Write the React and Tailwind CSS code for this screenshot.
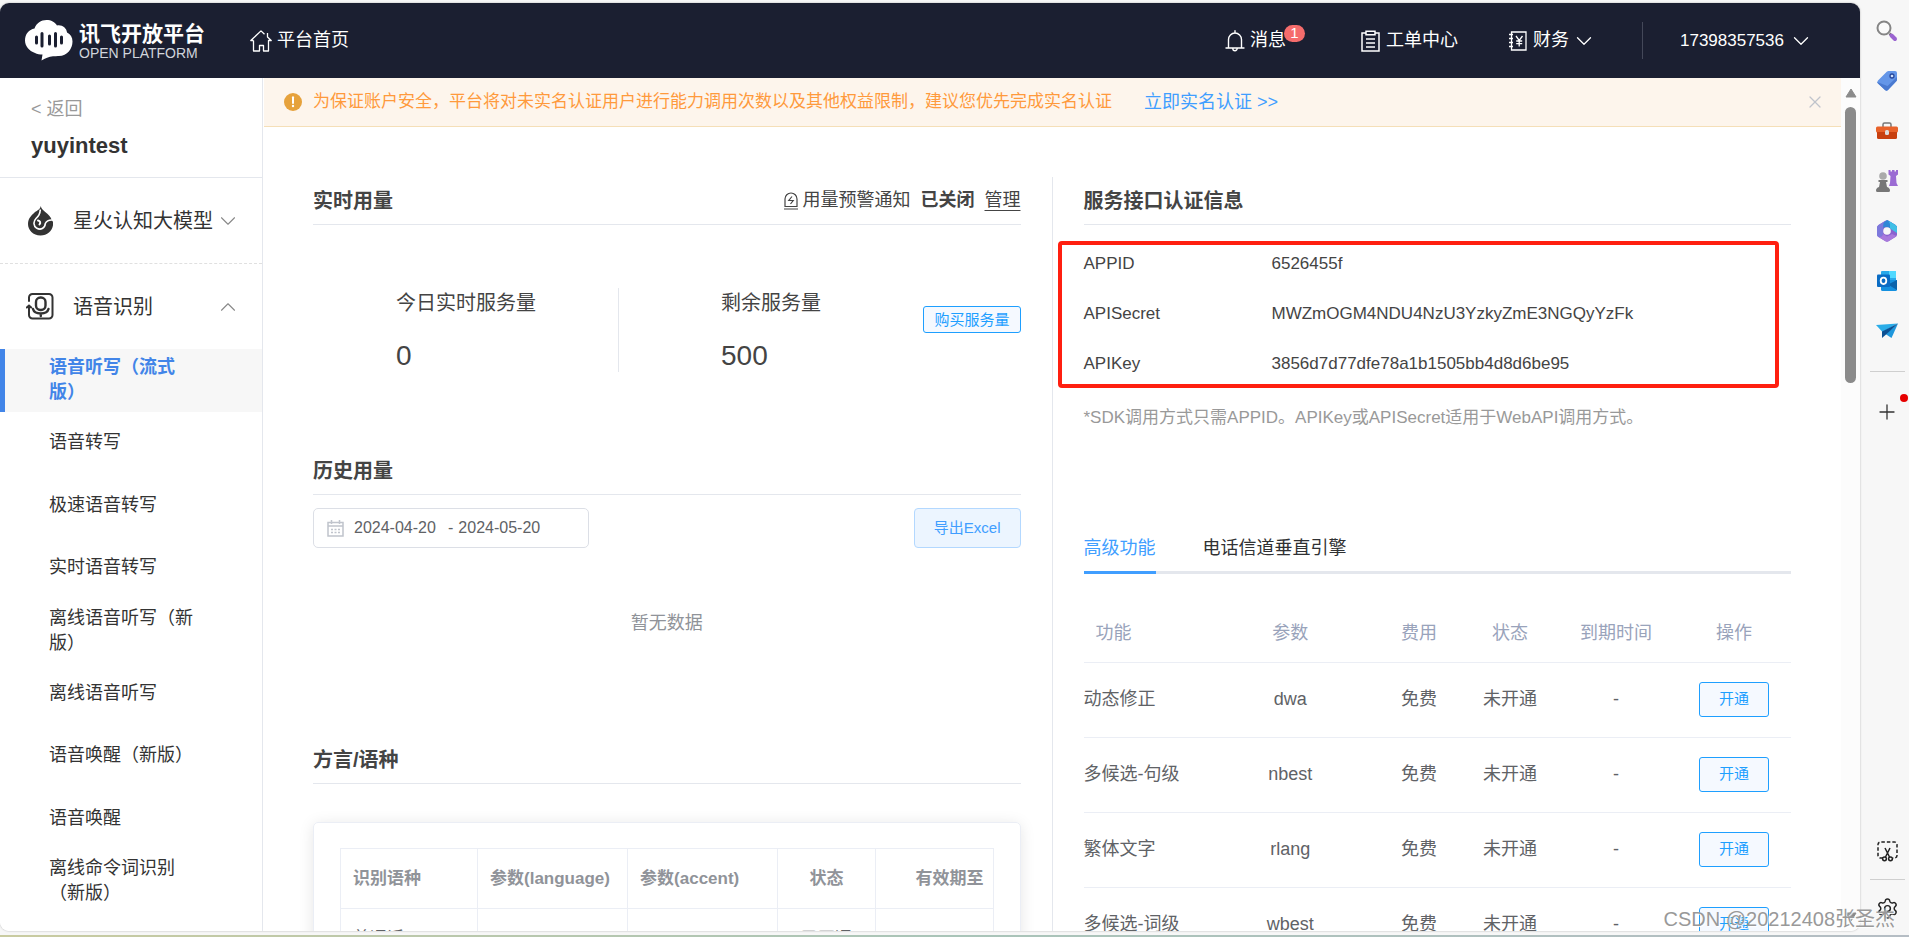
import React, { useState } from "react";
import { ChevronDown, ChevronUp, X, Plus, Settings } from "lucide-react";

const menuItems = [
  "语音听写（流式版）",
  "语音转写",
  "极速语音转写",
  "实时语音转写",
  "离线语音听写（新版）",
  "离线语音听写",
  "语音唤醒（新版）",
  "语音唤醒",
  "离线命令词识别（新版）",
];

const credentials = [
  { label: "APPID", value: "6526455f" },
  { label: "APISecret", value: "MWZmOGM4NDU4NzU3YzkyZmE3NGQyYzFk" },
  { label: "APIKey", value: "3856d7d77dfe78a1b1505bb4d8d6be95" },
];

const features = [
  { name: "动态修正", param: "dwa" },
  { name: "多候选-句级", param: "nbest" },
  { name: "繁体文字", param: "rlang" },
  { name: "多候选-词级", param: "wbest" },
];

// Icons
const LogoIcon = () => (
  <svg width="48" height="41" viewBox="0 0 48 41" aria-hidden="true">
    <path
      d="M10 33C4 31 0 26 0 20.500C0 14 4 9.500 9.500 8.500C11.500 3 16 0 21.500 0C26 0 30 2 32 5.500C37 4.500 41.500 8 42 12.500C45.500 14 47.500 17 47.500 21.500C47.500 29 42 36.500 33 36C31 36 29.500 36.500 28 36.300C24 36.500 20 38.500 16.500 40.500L17.500 34.500C15 34.500 12 34 10 33Z"
      fill="#fff"
    />
    <path d="M11.500 17v6M17 13.500v12.500M24.500 16v8M30.500 13.500v12.500M36.500 17v6" stroke="#1b1f31" strokeWidth="3" strokeLinecap="round" />
  </svg>
);

const HomeIcon = () => (
  <svg width="22" height="22" viewBox="0 0 22 22" fill="none" stroke="#fff" strokeWidth="1.300" aria-hidden="true">
    <path d="M3.500 10.500H.8L11 .9l3.500 3.300M17.500 3v4l3.700 3.500h-2.700V21h-5v-5.500h-4V21h-6V10.500" strokeLinejoin="round" />
  </svg>
);

const BellIcon = () => (
  <svg width="20" height="22" viewBox="0 0 20 22" fill="none" stroke="#fff" strokeWidth="1.400" aria-hidden="true">
    <path d="M1 18h18M3.500 18V9.500a6.500 6.500 0 0 1 13 0V18M10 3V.8M7.800 18.500a2.200 2.200 0 0 0 4.400 0" strokeLinecap="round" />
  </svg>
);

const ClipboardIcon = () => (
  <svg width="19" height="22" viewBox="0 0 19 22" fill="none" stroke="#fff" strokeWidth="1.500" aria-hidden="true">
    <path d="M5 3H1v18h17V3h-4M5 1.200h9v3.600H5zM5 9h9M5 13h9M5 17h9" />
  </svg>
);

const FinanceIcon = () => (
  <svg width="19" height="20" viewBox="0 0 19 20" fill="none" stroke="#fff" strokeWidth="1.300" aria-hidden="true">
    <path d="M3.500 1H18v18H3.500zM1 3.500h4M1 7.500h4M1 11.500h4M1 15.500h4M8 5l3.200 4.500L14.500 5M11.200 9.500V15.500M8.200 10h6M8.200 12.700h6" />
  </svg>
);

const FlameIcon = () => (
  <svg width="25" height="30" viewBox="0 0 25 30" aria-hidden="true">
    <path d="M12.800 0C13.500 5.500 22 7.500 23.500 13.500L25 16C26 23 20.500 29.500 12.500 29.500C5 29.500 0 24 0 18C0 12 4 9 7 6C9.500 4.500 12 3.500 12.800 0Z" fill="#333" />
    <path d="M12.300 3.500C12 8.500 10.500 10 8 12.500C5 15.500 5.500 20 8.500 22C12.500 24.500 17 22.500 17.300 17.500C18.500 15 20 13.500 25 14" fill="none" stroke="#fff" strokeWidth="1.600" />
    <path d="M10 14.500C12 15 13 16.500 11.500 18.500" fill="none" stroke="#fff" strokeWidth="2" strokeLinecap="round" />
  </svg>
);

const MicIcon = () => (
  <svg width="28" height="27" viewBox="0 0 28 27" fill="none" stroke="#333" strokeWidth="2" strokeLinecap="round" aria-hidden="true">
    <path d="M3 8V4.500A3.500 3.500 0 0 1 6.500 1H23a3.500 3.500 0 0 1 3.500 3.500V22a3.500 3.500 0 0 1-3.500 3.500H6.500A3.500 3.500 0 0 1 3 22v-8M.8 14.500L3 12.500l2.200 2" />
    <rect x="10" y="4.500" width="9.500" height="12.500" rx="4.500" strokeWidth="2.400" />
    <path d="M7 16c1.500 6 14 6 15.500 0M14.800 20.500V23" strokeWidth="2.400" />
  </svg>
);

const AlarmIcon = () => (
  <svg width="16" height="18" viewBox="0 0 16 18" fill="none" stroke="#444" strokeWidth="1.200" aria-hidden="true">
    <path d="M2 14.500V7a6 6 0 0 1 12 0v7.500zM1 17h14M9 4.500L5.800 8.500h4.400L7.500 12" />
  </svg>
);

const CalendarIcon = () => (
  <svg width="17" height="17" viewBox="0 0 17 17" fill="none" stroke="#c0c4cc" strokeWidth="1.500" aria-hidden="true">
    <path d="M1 2.500h15V16H1zM1 6h15M4.500 0v4M12.500 0v4" />
    <path d="M4 9.500h9M4 12.500h9" strokeDasharray="2 1.500" />
  </svg>
);

const WarningIcon = () => (
  <svg width="18" height="18" viewBox="0 0 18 18" aria-hidden="true">
    <circle cx="9" cy="9" r="9" fill="#e6a23c" />
    <path d="M9 4.300v5.700" stroke="#fff" strokeWidth="2" strokeLinecap="round" />
    <circle cx="9" cy="13" r="1.200" fill="#fff" />
  </svg>
);

const railIcons = [
  {
    name: "搜索",
    icon: (
      <svg width="22" height="22" viewBox="0 0 22 22" fill="none">
        <path d="M13.500 13.500l2 2" stroke="#777" strokeWidth="2.500" />
        <path d="M15.500 15.500l3.500 3.500" stroke="#9a63d0" strokeWidth="4" strokeLinecap="round" />
        <circle cx="8" cy="8" r="6.500" stroke="#858585" strokeWidth="2" fill="#fafafa" />
      </svg>
    ),
  },
  {
    name: "购物",
    icon: (
      <svg width="22" height="22" viewBox="0 0 22 22">
        <path d="M11 1.500q.8-.5 1.500-.5H19q2 0 2 2v6.500q0 1-.7 1.800L12 20q-1.500 1.500-3 0l-7-6.500q-1.500-1.500 0-3z" fill="#6496e8" />
        <path d="M1 12q.2.800 1 1.500L9 20q1.500 1.500 3 0l8.300-8.700q.7-.8.700-1.800V7L11.500 16z" fill="#4a7ad0" />
        <circle cx="16" cy="6" r="2" fill="#cfe0fb" stroke="#27489c" strokeWidth="1.300" />
      </svg>
    ),
  },
  {
    name: "工具",
    icon: (
      <svg width="22" height="22" viewBox="0 0 22 22">
        <path d="M7 7V4.500Q7 3 8.500 3h5Q15 3 15 4.500V7" fill="none" stroke="#777" strokeWidth="1.500" />
        <rect x="0" y="6.500" width="22" height="6" rx="1.500" fill="#e8622a" />
        <path d="M1 12h20v5.500q0 1.500-1.500 1.500h-17Q1 19 1 17.500z" fill="#c8400f" />
        <rect x="9" y="10" width="4" height="5" rx="1.500" fill="#ddd" />
      </svg>
    ),
  },
  {
    name: "游戏",
    icon: (
      <svg width="22" height="22" viewBox="0 0 22 22">
        <path d="M12.500 0h2v1.500h1.500V0h2.500v1.500H20V0h2v4.500l-2 1.500.5 7 1.500 3h-9l1-3 .5-7-2-1.500z" fill="#9b6bd3" />
        <circle cx="7" cy="6" r="3.800" fill="#aaa" />
        <path d="M2.500 10h9v2H10l1 5q3 1 3 3.500 0 1.500-1.500 1.500h-11Q0 22 0 20.500 0 18 3 17l1-5H2.500z" fill="#777" />
      </svg>
    ),
  },
  {
    name: "Microsoft 365",
    icon: (
      <svg width="22" height="22" viewBox="0 0 22 22">
        <path d="M9.500.7q1.500-.9 3 0L19.500 5Q21 6 21 7.500v7q0 1.500-1.500 2.500l-7 4.300q-1.500.9-3 0L2.500 17Q1 16 1 14.500v-7Q1 6 2.500 5z" fill="#8a62cf" />
        <path d="M9.500.7L2.500 5Q1 6 1 7.500v7Q1 16 2.500 17q4 .5 4.500-3V9q0-1.500 1.300-2.300L13 4z" fill="#7d79dc" />
        <path d="M11 0q.8 0 1.500.7L19.500 5Q21 6 21 7.500V14q0-2-1.500-3L14 8 8.500 7q-1.500.5-1.500 2L7.500 3z" fill="#2f86d6" />
        <path d="M12.500.7L19.500 5Q21 6 21 7.500V13l-7-4.500V4z" fill="#41bfe6" />
        <path d="M2.500 17q4 .5 4.500-3l4 2.500 5-2.500 4.500 2-8 5.300q-1.500.9-3 0z" fill="#a879dc" />
        <circle cx="11" cy="11" r="3.800" fill="#f7f7f7" />
      </svg>
    ),
  },
  {
    name: "Outlook",
    icon: (
      <svg width="22" height="22" viewBox="0 0 22 22">
        <rect x="5" y="1" width="15" height="14" rx="1" fill="#28a8ea" />
        <path d="M13 1h7v7h-7z" fill="#50d9ff" />
        <path d="M5 10h16v9.500q0 1.500-1.500 1.500H6.500Q5 21 5 19.500z" fill="#1490df" />
        <path d="M21 10v10L12 14.500z" fill="#0a63ab" />
        <rect x="1" y="4.500" width="13" height="12.500" rx="1" fill="#0a6cc4" />
        <ellipse cx="7.500" cy="10.800" rx="2.800" ry="3.200" fill="none" stroke="#fff" strokeWidth="1.800" />
      </svg>
    ),
  },
  {
    name: "发送",
    icon: (
      <svg width="22" height="22" viewBox="0 0 22 22">
        <path d="M0 5L22 3.500 6.500 12z" fill="#2bade8" />
        <path d="M22 3.500L15.500 18 9.500 14z" fill="#1f97dc" />
        <path d="M22 3.500L6 11.500v6.500l4-3.500z" fill="#0c4f92" />
      </svg>
    ),
  },
];

const Header = () => (
  <header className="flex h-[75px] shrink-0 items-center bg-[#1b1f31] pl-[25px] pr-[46px] text-[18px] text-white">
    <a href="#home" className="flex items-center gap-[6px]">
      <LogoIcon />
      <span className="flex flex-col">
        <span className="text-[21px] font-bold leading-[24px]">讯飞开放平台</span>
        <span className="text-[14px] leading-[14px] text-gray-300">OPEN PLATFORM</span>
      </span>
    </a>
    <a href="#index" className="ml-[45px] flex items-center gap-[5px]">
      <HomeIcon />
      平台首页
    </a>
    <nav className="ml-auto flex items-center">
      <a href="#message" className="relative flex items-center gap-[5px]">
        <BellIcon />
        消息
        <span className="absolute -right-[19px] -top-[2px] flex h-[17px] w-[21px] items-center justify-center rounded-full bg-[#f56c6c] text-[15px]">
          1
        </span>
      </a>
      <a href="#ticket" className="ml-[75px] flex items-center gap-[6px]">
        <ClipboardIcon />
        工单中心
      </a>
      <button type="button" className="ml-[50px] flex items-center">
        <FinanceIcon />
        <span className="ml-[6px] mr-[2px]">财务</span>
        <ChevronDown size={26} strokeWidth={1.2} />
      </button>
      <span className="ml-[45px] h-[37px] w-px bg-[#444859]" />
      <button type="button" className="ml-[37px] flex items-center gap-[4px] text-[17px]">
        17398357536
        <ChevronDown size={26} strokeWidth={1.2} />
      </button>
    </nav>
  </header>
);

const Sidebar = ({ active, onSelect }) => (
  <aside className="w-[263px] shrink-0 overflow-hidden border-r border-[#e4e7ed] bg-white text-[#333]">
    <div className="h-[100px] border-b border-[#e4e7ed] pl-[31px] pt-[18px]">
      <a href="#back" className="block text-[18px] leading-[26px] text-[#999]">&lt; 返回</a>
      <h1 className="mt-[9px] text-[22px] font-bold leading-[30px]">yuyintest</h1>
    </div>
    <button type="button" className="flex h-[86px] w-full items-center border-b border-dashed border-[#e0e0e0] pl-[28px] text-[20px]">
      <FlameIcon />
      <span className="ml-[20px]">星火认知大模型</span>
      <ChevronDown size={26} strokeWidth={1} className="ml-[2px] text-[#888]" />
    </button>
    <button type="button" className="flex h-[85px] w-full items-center pl-[26px] text-[20px]">
      <MicIcon />
      <span className="ml-[19px]">语音识别</span>
      <ChevronUp size={26} strokeWidth={1} className="ml-auto mr-[21px] text-[#888]" />
    </button>
    <ul className="flex h-[563px] flex-col">
      {menuItems.map((item) => (
        <li key={item} className="flex-1">
          <button
            type="button"
            onClick={() => onSelect(item)}
            className={
              item === active
                ? "flex h-full w-full items-center border-l-[5px] border-[#4285e8] bg-[#f7f7f7] pl-[44px] pr-[68px] text-left text-[18px] font-bold leading-[25px] text-[#4285e8]"
                : "flex h-full w-full items-center pl-[49px] pr-[68px] text-left text-[18px] leading-[25px]"
            }
          >
            {item}
          </button>
        </li>
      ))}
    </ul>
  </aside>
);

const Banner = () => (
  <div className="flex h-[49px] shrink-0 items-center border-b border-[#f5dfb8] bg-[#fdf5ec] pl-[20px] pr-[16px] text-[17px] text-[#ff9a3c]">
    <WarningIcon />
    <p className="ml-[11px]">
      为保证账户安全，平台将对未实名认证用户进行能力调用次数以及其他权益限制，建议您优先完成实名认证
    </p>
    <a href="#verify" className="ml-8 text-[18px] text-[#409eff]">立即实名认证 &gt;&gt;</a>
    <button type="button" aria-label="关闭" className="ml-auto text-[#c0c4cc]">
      <X size={20} strokeWidth={1.5} />
    </button>
  </div>
);

const SectionTitle = ({ title, children }) => (
  <div className="flex h-[48px] items-center justify-between border-b border-[#e4e7ed]">
    <h2 className="text-[20px] font-bold">{title}</h2>
    {children}
  </div>
);

const UsagePanel = () => (
  <section className="flex-1 pl-[49px] pr-[31px]">
    {/* Realtime usage */}
    <SectionTitle title="实时用量">
      <div className="flex items-center text-[18px]">
        <AlarmIcon />
        <span className="ml-[4px]">用量预警通知</span>
        <span className="ml-[10px] font-bold">已关闭</span>
        <a href="#manage" className="ml-[10px] underline underline-offset-4">管理</a>
      </div>
    </SectionTitle>
    <div className="mt-[63px] flex h-[84px]">
      <div className="w-[306px] border-r border-[#e4e7ed] pl-[83px]">
        <p className="text-[20px] leading-[30px]">今日实时服务量</p>
        <p className="mt-[20px] text-[28px] leading-[36px]">0</p>
      </div>
      <div className="pl-[102px]">
        <p className="text-[20px] leading-[30px]">剩余服务量</p>
        <p className="mt-[20px] text-[28px] leading-[36px]">500</p>
      </div>
      <button type="button" className="ml-auto mt-[18px] h-[27px] rounded-[3px] border border-[#1e9fff] bg-[#f5f9ff] px-[10px] text-[15px] leading-[25px] text-[#1e9fff]">
        购买服务量
      </button>
    </div>

    {/* History */}
    <div className="mt-[75px]">
      <SectionTitle title="历史用量" />
    </div>
    <div className="mt-[13px] flex h-[40px] items-center justify-between">
      <div className="flex h-full w-[276px] items-center rounded-[5px] border border-[#dcdfe6] pl-[13px] text-[16px] text-[#606266]">
        <CalendarIcon />
        <input type="text" aria-label="开始日期" defaultValue="2024-04-20" className="ml-[10px] w-[88px] bg-transparent outline-none" />
        <span className="ml-[6px]">-</span>
        <input type="text" aria-label="结束日期" defaultValue="2024-05-20" className="ml-[5px] w-[88px] bg-transparent outline-none" />
      </div>
      <button type="button" className="h-[40px] rounded-[4px] border border-[#b3d8ff] bg-[#ecf5ff] px-[19px] text-[15px] text-[#409eff]">
        导出Excel
      </button>
    </div>
    <p className="mt-[62px] text-center text-[18px] leading-[26px] text-[#909399]">暂无数据</p>

    {/* Dialects */}
    <div className="mt-[100px]">
      <SectionTitle title="方言/语种" />
    </div>
    <div className="mt-[38px] rounded-[5px] border border-[#ebeef5] px-[26px] pb-[26px] pt-[25px] shadow-[0_2px_15px_rgba(0,0,0,0.1)]">
      <table className="w-full table-fixed border-collapse text-[17px] text-[#606266]">
        <colgroup>
          <col className="w-[21%]" />
          <col className="w-[23%]" />
          <col className="w-[23%]" />
          <col className="w-[15%]" />
          <col className="w-[18%]" />
        </colgroup>
        <thead>
          <tr className="h-[60px] text-left text-[#909399]">
            <th className="border border-[#ebeef5] pl-[12px]">识别语种</th>
            <th className="whitespace-nowrap border border-[#ebeef5] pl-[12px]">参数(language)</th>
            <th className="border border-[#ebeef5] pl-[12px]">参数(accent)</th>
            <th className="border border-[#ebeef5] text-center">状态</th>
            <th className="border border-[#ebeef5] pr-[9px] text-right">有效期至</th>
          </tr>
        </thead>
        <tbody>
          <tr className="h-[60px]">
            <td className="border border-[#ebeef5] pl-[12px]">普通话</td>
            <td className="border border-[#ebeef5] pl-[12px]">zh_cn</td>
            <td className="border border-[#ebeef5] pl-[12px]">mandarin</td>
            <td className="border border-[#ebeef5] text-center">已开通</td>
            <td className="border border-[#ebeef5] pr-[9px] text-right">--</td>
          </tr>
        </tbody>
      </table>
    </div>
  </section>
);

const ServicePanel = ({ tab, setTab }) => (
  <section className="flex-1 border-l border-[#e4e7ed] pl-[31px] pr-[50px]">
    <SectionTitle title="服务接口认证信息" />
    <div className="relative pt-[14px] text-[17px]">
      <div className="pointer-events-none absolute -left-[26px] right-[12px] top-[16px] h-[147px] rounded-[4px] border-4 border-[#ff1f10]" />
      <dl>
        {credentials.map((item) => (
          <div key={item.label} className="flex h-[50px] items-center">
            <dt className="w-[188px]">{item.label}</dt>
            <dd>{item.value}</dd>
          </div>
        ))}
      </dl>
      <p className="mt-[16px] leading-[26px] text-[#999]">*SDK调用方式只需APPID。APIKey或APISecret适用于WebAPI调用方式。</p>
    </div>

    <div role="tablist" className="mt-[94px] flex gap-[47px] border-b-[3px] border-[#e4e7ed] text-[18px]">
      {["高级功能", "电话信道垂直引擎"].map((name) => (
        <button
          key={name}
          type="button"
          role="tab"
          aria-selected={name === tab}
          onClick={() => setTab(name)}
          className={
            name === tab
              ? "-mb-[3px] h-[49px] border-b-[3px] border-[#409eff] text-[#409eff]"
              : "-mb-[3px] h-[49px] border-b-[3px] border-transparent text-[#303133]"
          }
        >
          {name}
        </button>
      ))}
    </div>

    <table className="mt-[31px] w-full table-fixed border-collapse text-center text-[18px] text-[#606266]">
      <colgroup>
        <col className="w-[124px]" />
        <col />
        <col className="w-[92px]" />
        <col className="w-[90px]" />
        <col className="w-[122px]" />
        <col className="w-[114px]" />
      </colgroup>
      <thead>
        <tr className="h-[57px] border-b border-[#ebeef5] text-[#99a3bb]">
          <th className="pl-[12px] text-left font-normal">功能</th>
          <th className="font-normal">参数</th>
          <th className="font-normal">费用</th>
          <th className="font-normal">状态</th>
          <th className="font-normal">到期时间</th>
          <th className="font-normal">操作</th>
        </tr>
      </thead>
      <tbody>
        {features.map((item) => (
          <tr key={item.param} className="h-[75px] border-b border-[#ebeef5]">
            <td className="whitespace-nowrap text-left">{item.name}</td>
            <td>{item.param}</td>
            <td>免费</td>
            <td>未开通</td>
            <td>-</td>
            <td>
              <button type="button" className="h-[35px] w-[70px] rounded-[3px] border border-[#1e9fff] bg-[#f5f9ff] align-middle text-[15px] text-[#1e9fff]">
                开通
              </button>
            </td>
          </tr>
        ))}
      </tbody>
    </table>
  </section>
);

const ScrollTrack = () => (
  <div className="flex w-[19px] shrink-0 flex-col items-center bg-[#fcfcfc] pb-[9px] pt-[10px]">
    <svg width="12" height="10" viewBox="0 0 12 10" aria-hidden="true">
      <path d="M6 1l5 8H1z" fill="#8b8b8b" stroke="#8b8b8b" strokeLinejoin="round" />
    </svg>
    <div className="mt-[9px] h-[276px] w-[11px] rounded-full bg-[#8b8b8b]" />
    <svg width="12" height="10" viewBox="0 0 12 10" className="mt-auto" aria-hidden="true">
      <path d="M6 9l5-8H1z" fill="#8b8b8b" stroke="#8b8b8b" strokeLinejoin="round" />
    </svg>
  </div>
);

const BrowserRail = () => (
  <aside className="flex w-[49px] shrink-0 flex-col items-center pl-[5px] pt-[17px] text-[#333]">
    <div className="flex flex-col gap-[28px]">
      {railIcons.map((item) => (
        <button key={item.name} type="button" aria-label={item.name} className="h-[22px]">
          {item.icon}
        </button>
      ))}
    </div>
    <span className="mt-[29px] h-px w-[35px] bg-[#cfcfcf]" />
    <button type="button" aria-label="添加" className="relative mt-[28px]">
      <Plus size={24} strokeWidth={1.3} />
      <span className="absolute -right-[9px] -top-[6px] h-[8px] w-[8px] rounded-full bg-[#e60000]" />
    </button>
    <button type="button" aria-label="截图" className="mb-[17px] mt-auto">
      <svg width="21" height="21" viewBox="0 0 21 21" fill="none" stroke="#222" strokeWidth="1.500">
        <path d="M6 17H3.500A2.500 2.500 0 0 1 1 14.500v-11A2.500 2.500 0 0 1 3.500 1h14A2.500 2.500 0 0 1 20 3.500v11a2.500 2.500 0 0 1-2.500 2.500H16" strokeDasharray="3.500 2" />
        <path d="M8 7l4.500 9M13 7l-4.500 9" />
        <circle cx="7.500" cy="17.800" r="1.900" />
        <circle cx="13.500" cy="17.800" r="1.900" />
      </svg>
    </button>
    <span className="h-px w-[35px] bg-[#cfcfcf]" />
    <button type="button" aria-label="设置" className="mb-[11px] mt-[17px] text-[#222]">
      <Settings size={23} strokeWidth={1.5} />
    </button>
  </aside>
);

function App() {
  const [active, setActive] = useState(menuItems[0]);
  const [tab, setTab] = useState("高级功能");

  return (
    <div className="relative flex h-screen w-full flex-col overflow-hidden bg-[#f7f7f7] pt-[3px] font-['Liberation_Sans','Noto_Sans_CJK_SC',sans-serif] text-[#444]">
      <div className="flex min-h-0 flex-1">
        <div className="flex min-w-0 flex-1 flex-col overflow-hidden rounded-[9px] bg-white shadow-[0_0_2px_rgba(0,0,0,0.3)]">
          <Header />
          <div className="flex min-h-0 flex-1">
            <Sidebar active={active} onSelect={setActive} />
            <main className="flex min-w-0 flex-1 flex-col overflow-hidden pl-px">
              <Banner />
              <div className="flex min-h-0 flex-1 pt-[50px]">
                <UsagePanel />
                <ServicePanel tab={tab} setTab={setTab} />
              </div>
            </main>
            <ScrollTrack />
          </div>
        </div>
        <BrowserRail />
      </div>
      <div className="mt-[4px] h-[2px] shrink-0 bg-linear-to-r from-[#c9cba0] via-[#a9c4b8] to-[#b5bdc4]" />

      <p className="pointer-events-none absolute bottom-[5px] right-[14px] text-[20px] leading-[26px] text-[#999] [text-shadow:1px_1px_1px_white]">
        CSDN @20212408张圣杰
      </p>
    </div>
  );
}

export default App;
